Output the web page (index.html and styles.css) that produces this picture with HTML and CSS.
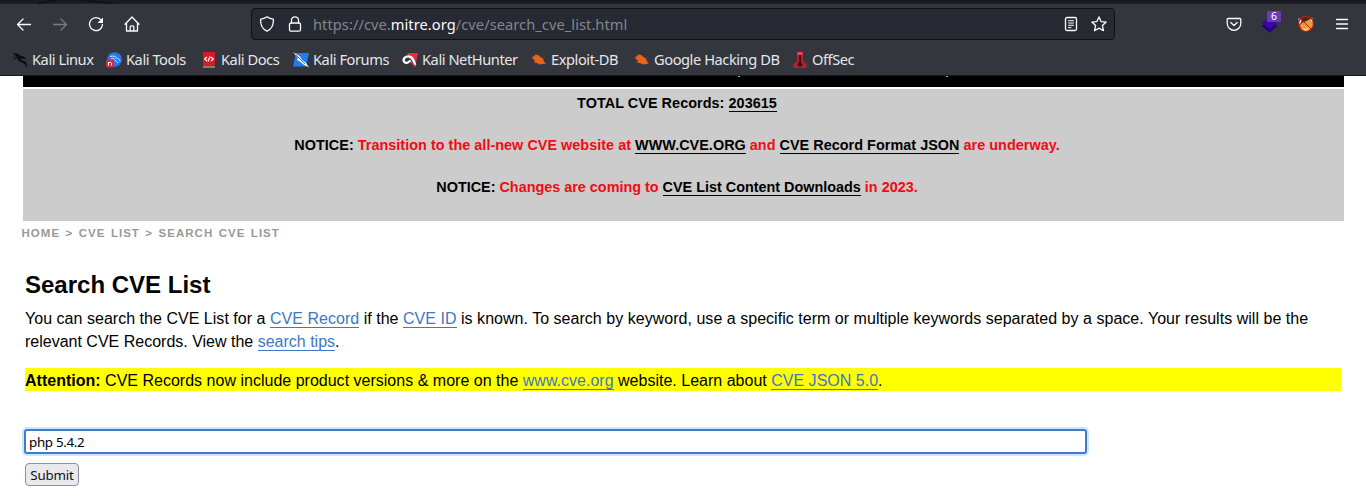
FILE: index.html
```
<!DOCTYPE html>
<html lang="en">
<head>
<meta charset="utf-8">
<title>CVE - Search CVE List</title>
<link rel="stylesheet" href="styles.css">
</head>
<body>
<header class="browser">
  <div class="tabs-edge"><svg width="130" height="4"><path d="M38 3.500 56 0M80 0l33 3.500" stroke="#101115" stroke-width="1.500" fill="none"/></svg></div>
  <div class="toolbar">
    <nav class="nav-buttons">
      <svg class="icon" viewBox="0 0 16 16"><path d="M14.500 8.500h-13M7 3 1.500 8.500 7 14"/></svg>
      <svg class="icon disabled" viewBox="0 0 16 16"><path d="M1.500 8.500h13M9 3l5.500 5.500L9 14"/></svg>
      <svg class="icon" viewBox="0 0 16 16"><path d="M13.400 4.500A6.500 6.500 0 1 0 14.500 8.500"/><path d="M15 1.500v5.500H9.500z" fill="#fbfbfe" stroke="none"/></svg>
      <svg class="icon" viewBox="0 0 16 16"><path d="M1 8.200 8 1l7 7.200M2.500 7v8h11V7M6.200 15v-4.200a1 1 0 0 1 1-1h1.600a1 1 0 0 1 1 1V15"/></svg>
    </nav>
    <div class="urlbar">
      <svg class="icon" viewBox="0 0 16 16"><path d="M8 .8c2 1.600 4 2.200 6.300 2.300C14.800 9 13 13 8 15.200 3 13 1.200 9 1.700 3.100 4 3 6 2.400 8 .8z"/></svg>
      <svg class="icon lock" viewBox="0 0 16 16"><path d="M4.500 7V4.300a3.500 3.500 0 0 1 7 0V7"/><rect x="2.500" y="7" width="11" height="8.200" rx="1.500"/></svg>
      <span class="url">https://cve.<b>mitre.org</b>/cve/search_cve_list.html</span>
      <svg class="icon" viewBox="0 0 16 16"><rect x="2.500" y="1.500" width="11" height="13" rx="1.500"/><path d="M5.500 4.700h5M5.500 7h5M5.500 9.300h5M5.500 11.600h2.500" stroke-width="1"/></svg>
      <svg class="icon" viewBox="0 0 16 16"><path d="m8 .9 2.100 4.700 5.100.5-3.800 3.500 1.100 5.100L8 12.100l-4.500 2.600 1.100-5.100L.8 6.100l5.100-.5z"/></svg>
    </div>
    <div class="actions">
      <svg class="icon" viewBox="0 0 16 16"><path d="M2.200 2.500h11.600a1 1 0 0 1 1 1v4a6.800 6.800 0 0 1-13.600 0v-4a1 1 0 0 1 1-1z"/><path d="m4.800 6.500 3.200 3 3.200-3"/></svg>
      <div class="extension">
        <svg width="17" height="17" viewBox="0 0 17 17"><path d="m.5 10 8 6.500 8-6.500-8-6z" fill="#230080"/><path d="m.5 7 8-6 8 6-8 6z" fill="#3b08a4"/></svg>
        <span class="badge">6</span>
      </div>
      <svg width="18" height="18" viewBox="0 0 18 18"><circle cx="9" cy="9" r="7.200" fill="#4a2925"/><path d="M2.500 10 6 7.500 10.500 5.500 13 4l2.500 2 .5 5-3 4-4 1.500-4-1.500z" fill="#ee9838"/><path d="m1.500 3 3 2.500L4 8 2 9zM14 2.500l1.500 1L16 8l-2.500-2.500z" fill="#ffe9c8"/><path d="m6 13 3 1 3-2-2 3.500H7z" fill="#ffd09a"/><circle cx="9" cy="9" r="7.600" fill="none" stroke="#b81c19" stroke-width="1.200"/><path d="m3.700 3.700 10.600 10.600" stroke="#b81c19" stroke-width="1"/></svg>
      <svg class="icon" viewBox="0 0 16 16"><path d="M2.500 3.500h11M2.500 8h11M2.500 12.500h11"/></svg>
    </div>
  </div>
  <nav class="bookmarks">
    <a><svg viewBox="0 0 16 16"><path d="M0 1c4-.2 7 .8 9 3l3 .5 2 3-3-1-3 .5c0 1.500 4 1 6 3.500 1 1.500 1 3 1.500 5.500C13.500 13 12.500 11 9 10 6.500 9.500 5.500 8 6 6L1 7.500 5.500 4 0 4.500l4-1.500z" fill="#090a0c"/></svg><span>Kali Linux</span></a>
    <a><svg viewBox="0 0 16 16"><circle cx="8.500" cy="7.500" r="7.300" fill="#2777ed"/><path d="M4 4.500c4-1 6 0 7 2 2 0 2.500 1 3 3M5 7c2-1 3-.5 4 .5 0 2 2 1.500 3 3.500" stroke="#d9eaff" fill="none"/><rect y="7.500" width="8" height="8" rx="2.500" fill="#e22638"/><path d="M2.500 13.500V10M2.500 10.500h2q1 0 1 1v2" stroke="#fff" fill="none"/></svg><span>Kali Tools</span></a>
    <a><svg viewBox="0 0 16 16"><path d="M2 0h12v14H2z" fill="#d91924"/><path d="M2 15h12" stroke="#e6b6b9"/><path d="M6 5 3.800 7 6 9M10 5l2.200 2L10 9M9 4.500l-2 5" stroke="#fff" fill="none" stroke-width="1.200"/></svg><span>Kali Docs</span></a>
    <a><svg viewBox="0 0 16 16"><path d="M3 1h13l-3 13.500H0z" fill="#247aef"/><path d="m0 0 7 4.500 2 3.500 4 3 3 4.500-5.500-3L7 9.500 4 8l1-2z" fill="#fff"/><path d="m3 3 9 9" stroke="#333" stroke-width=".7"/></svg><span>Kali Forums</span></a>
    <a><svg viewBox="0 0 16 16"><path d="M5 1h11l-2.500 12L8 7z" fill="#db3345"/><path d="M2 9.500C.5 6.500 4 4 7 4.500c4 .5 4.500 4 6 8" stroke="#fff" stroke-width="2.300" fill="none" stroke-linecap="round"/><path d="M2.500 10c1.500 2 4 .5 6-1.500" stroke="#fff" stroke-width="2.200" fill="none"/><path d="m9 10 4.500 4.500" stroke="#db3345" stroke-width="1.500"/></svg><span>Kali NetHunter</span></a>
    <a><svg viewBox="0 0 16 16"><path d="m1 5 2.500-1L4 2.500 7 3l2.500 2L12 6.500l1 3 2 2-3 .5-3 .5-3-1.500-3-.5 1-2-2-1.500z" fill="#e8641b"/><path d="m12 6 2-1.500M3 10l-2 1" stroke="#60382b"/></svg><span>Exploit-DB</span></a>
    <a><svg viewBox="0 0 16 16"><path d="m1 5 2.500-1L4 2.500 7 3l2.500 2L12 6.500l1 3 2 2-3 .5-3 .5-3-1.500-3-.5 1-2-2-1.500z" fill="#e8641b"/><path d="m12 6 2-1.500M3 10l-2 1" stroke="#60382b"/></svg><span>Google Hacking DB</span></a>
    <a><svg viewBox="0 0 16 16"><path d="M5 0h6v9l3.500 3v4h-13v-4L5 9z" fill="#bd1d30"/><path d="M7 3h2v7l2 3-3 2-3-2 2-3z" fill="#420b14"/><path d="M5.500 0h5v3h-5z" fill="#e4495b"/></svg><span>OffSec</span></a>
  </nav>
</header>
<main class="page">
  <div class="banner"><i></i><i></i></div>
  <section class="notices">
    <p class="total">TOTAL CVE Records: <a>203615</a></p>
    <p class="transition">NOTICE: <em>Transition to the all-new CVE website at <a>WWW.CVE.ORG</a> and <a>CVE Record Format JSON</a> are underway.</em></p>
    <p>NOTICE: <em>Changes are coming to <a>CVE List Content Downloads</a> in 2023.</em></p>
  </section>
  <nav class="crumbs">HOME &gt; CVE LIST &gt; SEARCH CVE LIST</nav>
  <section class="content">
    <h1>Search CVE List</h1>
    <p class="intro">You can search the CVE List for a <a>CVE Record</a> if the <a>CVE ID</a> is known. To search by keyword, use a specific term or multiple keywords separated by a space. Your results will be the<br><span class="last">relevant CVE Records. View the <a>search tips</a>.</span></p>
    <p class="attention"><strong>Attention:</strong> CVE Records now include product versions &amp; more on the <a>www.cve.org</a> website. Learn about <a>CVE JSON 5.0</a>.</p>
    <form class="search">
      <input class="query" type="text" value="php 5.4.2">
      <button class="submit" type="button">Submit</button>
    </form>
  </section>
</main>
</body>
</html>
```
FILE: styles.css
```
* { box-sizing: border-box; }
body { margin: 0; background: #fff; color: #000; font-family: "Liberation Sans", Arial, sans-serif; height: 497px; overflow: hidden; }
p, h1 { margin: 0; }
svg { display: block; flex: none; }

.browser { height: 76px; background: #33363d; border-bottom: 1px solid #15171b; font-family: "Noto Sans", sans-serif; }
.tabs-edge { height: 4px; background: #191b20; border-bottom: 1px solid #202228; }
.toolbar { height: 40px; display: flex; align-items: center; padding: 0 16px; }
.icon { width: 16px; height: 16px; fill: none; stroke: #fbfbfe; stroke-width: 1.3; stroke-linecap: round; stroke-linejoin: round; }
.disabled { stroke: #787b81; }
.nav-buttons { display: flex; gap: 20px; width: 235px; }
.urlbar { width: 864px; height: 32px; border: 1px solid #0e1116; border-radius: 4px; background: #272933; display: flex; align-items: center; padding: 0 7px; }
.lock { margin: 0 10px 0 12px; }
.url { flex: 1; font-size: 14.67px; line-height: 20px; letter-spacing: 0.05px; color: #84868e; white-space: nowrap; }
.url b { font-weight: 400; color: #fbfbfe; }
.urlbar .icon:last-child { margin-left: 12px; }
.actions { display: flex; align-items: center; gap: 19px; margin-left: 111px; }
.extension { position: relative; }
.badge { position: absolute; left: 6px; top: -5px; width: 14px; height: 11px; background: #6939b7; color: #fff; font-size: 10.5px; line-height: 11px; text-align: center; border-radius: 1px; }

.bookmarks { height: 31px; display: grid; grid-template-columns: 94px 95px 92px 109px 129px 103px 158px 90px; padding-left: 12px; align-items: center; color: #e6e6e9; }
.bookmarks a { display: flex; align-items: center; gap: 4px; font-size: 14.67px; letter-spacing: -0.45px; line-height: 20px; white-space: nowrap; }
.bookmarks span { padding-bottom: 2px; line-height: 18px; }
.bookmarks svg { width: 16px; height: 16px; }

.page { padding: 0 22px 0 23px; }
.banner { height: 11px; background: #000; display: flex; padding-left: 715px; gap: 206px; }
.banner i { width: 2px; height: 1px; background: #aaa; }
.notices { margin-top: 2px; height: 132px; background: #ccc; padding: 4px 13px 0 0; text-align: center; font-size: 14.4px; font-weight: 700; line-height: 21px; display: grid; grid-template-rows: repeat(3, 42px); white-space: nowrap; }
.total { letter-spacing: 0.06px; }
.transition { letter-spacing: 0.035px; }
.notices em { font-style: normal; color: #f10b12; }
.notices a { color: #000; border-bottom: 1px solid #000; }
.crumbs { margin-left: -1.5px; padding-top: 5px; height: 44px; color: #999; font-size: 11.5px; font-weight: 700; line-height: 14px; letter-spacing: 1.03px; word-spacing: 1.2px; }
.content { padding: 0 3px 0 2px; font-size: 16px; line-height: 23px; }
.content h1 { font-size: 24px; line-height: 28px; margin: 6px 0 8px; }
.content p { white-space: nowrap; }
.content p a { color: #3d78c3; border-bottom: 1px solid #3d78c3; }
.intro { height: 46px; letter-spacing: 0.029px; }
.last { letter-spacing: 0; }
.attention { margin-top: 15px; background: #ff0; height: 23px; line-height: 25px; letter-spacing: 0.01px; }
.search { margin-top: 38px; display: flex; flex-direction: column; align-items: flex-start; gap: 9px; font-family: "Noto Sans", sans-serif; }
.query { width: 1063px; height: 25px; margin-left: -1px; padding: 1px 3px; border: 2px solid #3d7dcc; border-radius: 3px; box-shadow: 0 0 0 2px #cfe5fc; font: 13.33px "Noto Sans", sans-serif; letter-spacing: -0.3px; outline: none; }
.submit { width: 54px; height: 23px; padding: 0; border: 1px solid #8f8f9d; border-radius: 4px; background: #e9e9ed; color: #111; font: 13.33px "Noto Sans", sans-serif; letter-spacing: -0.2px; }
```
